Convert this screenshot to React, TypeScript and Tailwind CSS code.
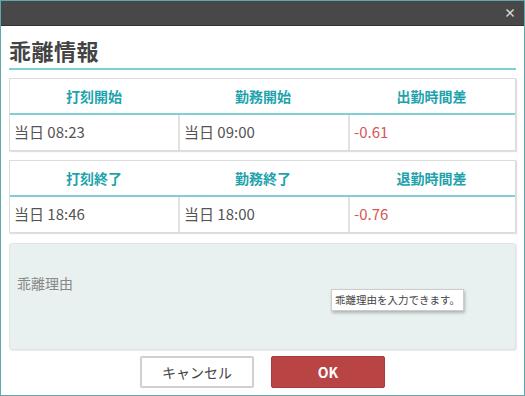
const font = { fontFamily: '"Noto Sans CJK JP", "Noto Sans", sans-serif' };

type Row = { labels: string[]; start: string; work: string; diff: string };

const rows: Row[] = [
  { labels: ["打刻開始", "勤務開始", "出勤時間差"], start: "当日 08:23", work: "当日 09:00", diff: "-0.61" },
  { labels: ["打刻終了", "勤務終了", "退勤時間差"], start: "当日 18:46", work: "当日 18:00", diff: "-0.76" },
];

function TimeTable({ row }: { row: Row }) {
  return (
    <div className="border border-[#dcdcdc] bg-white shadow-[1px_1px_1px_rgba(0,0,0,0.12)]">
      <div className="grid h-[36px] grid-cols-[168px_170px_1fr] items-center border-b-2 border-[#7fcfd4]">
        {row.labels.map((label) => (
          <div key={label} className="text-center text-[14px] font-bold text-[#1ea3ad]">
            {label}
          </div>
        ))}
      </div>
      <div className="grid h-[35px] grid-cols-[168px_170px_1fr] text-[15px]">
        <div className="flex items-center pl-[4px] text-[#555]">{row.start}</div>
        <div className="flex items-center border-l-2 border-[#e2e2e2] pl-[4px] text-[#555]">{row.work}</div>
        <div className="flex items-center border-l-2 border-[#e2e2e2] pl-[4px] text-[#d45757]">{row.diff}</div>
      </div>
    </div>
  );
}

export default function App() {
  return (
    <div style={font} className="flex h-[396px] w-[525px] flex-col border border-[#5fa8ae] bg-white">
      <div className="flex h-[25px] shrink-0 items-center justify-end border-b border-[#333] bg-[#484848] pr-[8px]">
        <span className="text-[12px] font-bold leading-none text-[#ddd]">×</span>
      </div>

      <div className="flex flex-1 flex-col px-[8px]">
        <div className="flex h-[44px] items-center border-b-2 border-[#7fd0d5] pt-[6px]">
          <h1 className="text-[22px] font-bold tracking-[0.5px] text-[#444]">乖離情報</h1>
        </div>

        <div className="mt-[8px] flex flex-col gap-[9px]">
          {rows.map((row) => (
            <TimeTable key={row.diff} row={row} />
          ))}
        </div>

        <div className="relative mt-[10px] h-[107px] rounded-[3px] border border-[#dde5e5] bg-[#e8f0f0] shadow-[1px_1px_1px_rgba(0,0,0,0.08)]">
          <div className="pl-[7px] pt-[29px] text-[14px] text-[#888]">乖離理由</div>
          <div className="absolute left-[321px] top-[45px] border border-[#ccc] bg-white px-[3px] py-[3px] text-[10.5px] leading-[14px] text-[#444] shadow-[1px_2px_3px_rgba(0,0,0,0.25)]">
            乖離理由を入力できます。
          </div>
        </div>

        <div className="mt-[6px] flex justify-center gap-[17px]">
          <button className="h-[32px] w-[114px] rounded-[2px] border-2 border-[#d0d0d0] bg-white text-[14px] text-[#444]">
            キャンセル
          </button>
          <button className="h-[32px] w-[114px] rounded-[2px] border border-[#a83a3a] bg-[#b94444] text-[14px] font-bold text-white">
            OK
          </button>
        </div>
      </div>
    </div>
  );
}
